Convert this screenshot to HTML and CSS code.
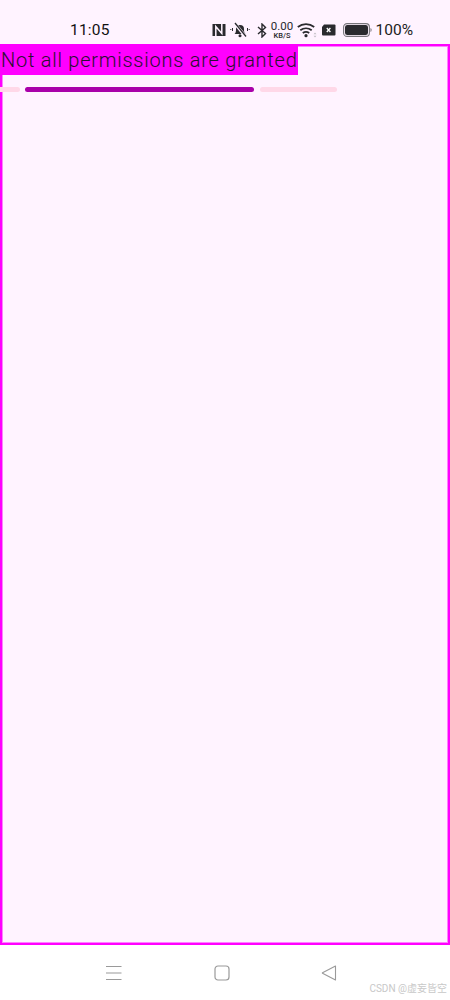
FILE: index.html
```html
<!DOCTYPE html>
<html lang="en">
<head>
<meta charset="utf-8">
<title>Permissions</title>
<link rel="stylesheet" href="styles.css">
</head>
<body>
<div class="phone">
  <header class="status">
    <span class="time">11:05</span>
    <div class="icons">
      <svg class="ic" width="14" height="14" viewBox="0 0 14 14"><rect x="0.500" y="1" width="13" height="12" fill="#2a2a2e"/><path d="M3.800 13V3.500L9.800 10.500V1" fill="none" stroke="#fff3ff" stroke-width="1.500"/></svg>
      <svg class="ic bell" width="20" height="16" viewBox="0 0 20 16"><path d="M4.500 12c1.300-1 1.500-2.500 1.500-5a4 4 0 0 1 8 0c0 2.500.2 4 1.500 5z" fill="#2a2a2e"/><circle cx="10" cy="13.700" r="1.500" fill="#2a2a2e"/><path d="M4.500 1l11 13.500" stroke="#fff3ff" stroke-width="3"/><path d="M5 1l11 13.500" stroke="#2a2a2e" stroke-width="1.300"/><path d="M2.500 6v3M0.800 7v1M17.500 6v3M19.200 7v1" stroke="#2a2a2e" stroke-width="1"/></svg>
      <svg class="ic bt" width="10" height="15" viewBox="0 0 10 15"><path d="M1 4l7.500 6.500L5 14V1l3.500 3.500L1 11" fill="none" stroke="#2a2a2e" stroke-width="1.400"/></svg>
      <div class="speed"><span class="num">0.00</span><span class="unit">KB/S</span></div>
      <svg class="ic wifi" width="20" height="16" viewBox="0 0 20 16"><path d="M0.800 5a13.500 13.500 0 0 1 16.400 0M3.300 8.200a9.500 9.500 0 0 1 11.400 0M5.800 11a5.500 5.500 0 0 1 6.400 0" fill="none" stroke="#2a2a2e" stroke-width="1.800"/><circle cx="9" cy="13.700" r="1.600" fill="#2a2a2e"/><path d="M18 10.500l1.500 1.800h-3zM18 15.500l1.500-1.800h-3z" fill="#c4c0c6"/></svg>
      <svg class="ic sim" width="15" height="12" viewBox="0 0 15 12"><path d="M3 0.500h10.500a1 1 0 0 1 1 1v9a1 1 0 0 1-1 1H2a1 1 0 0 1-1-1V3z" fill="#2a2a2e"/><path d="M5.800 4l3.600 4M9.400 4l-3.600 4" stroke="#fff" stroke-width="1.300"/></svg>
      <svg class="ic batt" width="29" height="14" viewBox="0 0 29 14"><rect x="0.600" y="0.600" width="25.800" height="12.800" rx="3.500" fill="none" stroke="#77757a" stroke-width="1.100"/><rect x="2" y="2" width="23" height="10" rx="2.300" fill="#2a2a2e"/><path d="M27.500 5v4a1.500 1.500 0 0 0 1-1.300v-1.400a1.500 1.500 0 0 0-1-1.300z" fill="#77757a"/></svg>
      <span class="pct">100%</span>
    </div>
  </header>
  <main class="frame">
    <div class="message">Not all permissions are granted</div>
    <div class="progress">
      <span class="seg seg-a"></span>
      <span class="seg seg-b"></span>
      <span class="seg seg-c"></span>
    </div>
  </main>
  <footer class="nav">
    <svg width="18" height="16" viewBox="0 0 18 16"><path d="M1 1.500h15.500M1 8h15.500M1 14.500h15.500" stroke="#9a9a9a" stroke-width="1.100" fill="none"/></svg>
    <svg width="16" height="16" viewBox="0 0 16 16"><rect x="1" y="1" width="14" height="14" rx="3" stroke="#9a9a9a" stroke-width="1.200" fill="none"/></svg>
    <svg width="16" height="16" viewBox="0 0 16 16"><path d="M14.500 1v14L1.500 8.300a.4.4 0 0 1 0-.6z" stroke="#9a9a9a" stroke-width="1.100" fill="none" stroke-linejoin="round"/></svg>
    <span class="mark">CSDN @虚妄皆空</span>
  </footer>
</div>
</body>
</html>
```
FILE: styles.css
```css
* { box-sizing: border-box; }
html, body { margin: 0; padding: 0; background: #fff; }
.phone {
  width: 450px;
  height: 1000px;
  display: flex;
  flex-direction: column;
  font-family: Roboto, "Noto Sans CJK SC", sans-serif;
  overflow: hidden;
}
.status {
  height: 44px;
  flex: none;
  background: #fff3ff;
  display: flex;
  align-items: center;
  padding: 16px 37px 0 70px;
  justify-content: space-between;
  color: #111;
}
.time { font-size: 15.500px; letter-spacing: 0.200px; }
.icons { display: flex; align-items: center; }
.ic { display: block; flex: none; }
.bell { margin-left: 4px; }
.bt { margin-left: 7px; }
.speed {
  display: flex;
  flex-direction: column;
  align-items: center;
  color: #2a2a2e;
  width: 23px;
  margin-left: 4px;
}
.num { font-size: 11.500px; line-height: 11px; }
.unit { font-size: 7.500px; line-height: 8px; font-weight: 500; }
.wifi { margin-left: 3px; }
.sim { margin-left: 4px; }
.batt { margin-left: 7px; }
.pct { font-size: 15.500px; margin-left: 4px; color: #222; }
.frame {
  height: 901px;
  flex: none;
  background: #fff3ff;
  border: 2px solid #ff00ff;
  box-shadow: inset 0 0 0 1px #ff80ff;
}
.message {
  width: fit-content;
  height: 29px;
  margin-left: -2px;
  background: #ff00ff;
  color: #2a1030;
  font-size: 20px;
  font-weight: 300;
  line-height: 28px;
  letter-spacing: 0.750px;
  padding-left: 1px;
  position: relative;
}
.progress {
  display: flex;
  gap: 5px;
  margin-top: 12px;
  height: 5px;
  margin-left: -2px;
}
.seg { display: block; height: 5px; border-radius: 3px; }
.seg-a { width: 20px; background: #ffd8e8; border-radius: 0 3px 3px 0; }
.seg-b { width: 229px; background: #a900a9; }
.seg-c { width: 77px; margin-left: 1px; background: #ffd8e8; }
.nav {
  flex: 1;
  position: relative;
  background: #fff;
  display: flex;
  justify-content: center;
  align-items: center;
  gap: 91px;
  padding: 0 9px 0 0;
}
.mark {
  position: absolute;
  right: 3px;
  bottom: 5px;
  font-size: 10px;
  color: #c8c8c8;
}
```
